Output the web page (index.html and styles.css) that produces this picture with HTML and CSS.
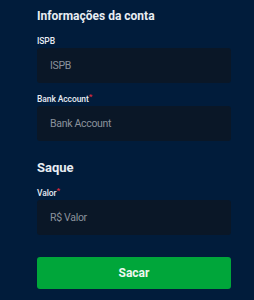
FILE: index.html
```html
<!DOCTYPE html>
<html>
<head>
<meta charset="utf-8">
<link rel="stylesheet" href="styles.css">
</head>
<body>
<div class="form">
  <h2 class="title">Informações da conta</h2>
  <div class="field">
    <label class="label">ISPB</label>
    <div class="input"><span class="ph">ISPB</span></div>
  </div>
  <div class="field">
    <label class="label">Bank Account<span class="req">*</span></label>
    <div class="input"><span class="ph">Bank Account</span></div>
  </div>
  <h2 class="title saque">Saque</h2>
  <div class="field">
    <label class="label">Valor<span class="req">*</span></label>
    <div class="input"><span class="ph">R$ Valor</span></div>
  </div>
  <button class="btn">Sacar</button>
</div>
</body>
</html>
```
FILE: styles.css
```css
html, body {
  margin: 0;
  padding: 0;
  background: #011c3b;
  font-family: Roboto, "Liberation Sans", sans-serif;
}
.form {
  display: flex;
  flex-direction: column;
  width: 194px;
  margin-left: 37px;
  padding-top: 9px;
}
.title {
  margin: 0;
  color: #e8edf3;
  font-size: 12px;
  font-weight: 700;
  line-height: 15px;
}
.saque {
  font-size: 13px;
  margin-top: 19px;
}
.field {
  display: flex;
  flex-direction: column;
  margin-top: 12px;
}
.field + .field { margin-top: 11px; }
.saque + .field { margin-top: 13px; }
.label {
  color: #e6ebf2;
  font-size: 8.5px;
  font-weight: 500;
  letter-spacing: -0.1px;
  line-height: 10px;
  height: 10px;
}
.req {
  color: #e02a3b;
  font-size: 8px;
  vertical-align: top;
  line-height: 6px;
}
.input {
  margin-top: 2px;
  height: 35px;
  background: #0a1727;
  border-radius: 3px;
  display: flex;
  align-items: center;
  padding-left: 13px;
}
.ph {
  color: #8a929c;
  font-size: 10.5px;
  letter-spacing: -0.3px;
}
.btn {
  margin-top: 22px;
  height: 32px;
  border: none;
  border-radius: 3px;
  background: #00a63a;
  color: #eef7ef;
  font-family: Roboto, "Liberation Sans", sans-serif;
  font-size: 12px;
  font-weight: 700;
  padding: 0;
}
```
